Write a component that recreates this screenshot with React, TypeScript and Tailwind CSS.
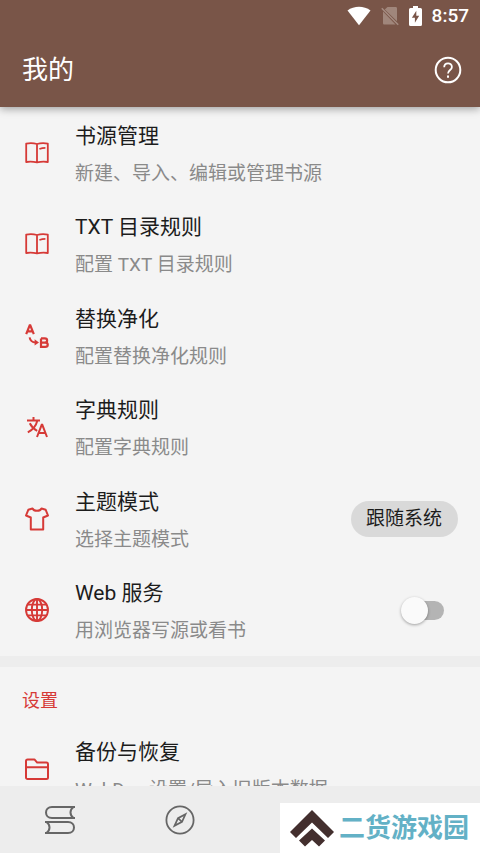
import type { ReactNode } from 'react';

type RowProps = {
    icon: ReactNode;
    title: string;
    summary: string;
    children?: ReactNode;
};

const iconProps = {
    viewBox: '0 0 24 24',
    fill: 'none',
    stroke: 'currentColor',
    strokeWidth: 2,
    strokeLinejoin: 'round' as const,
    className: 'size-6',
    'aria-hidden': true,
};

const BookIcon = () => (
    <svg {...iconProps} strokeWidth={1.8}>
        <path d="M1.2 2.6C4.5 2 8.5 2 12 3V21.4C8.5 20.6 4.5 20.4 1.2 21ZM12 3C15.5 2 19.5 2 22.8 2.6V21C19.5 20.4 15.5 20.6 12 21.4" />
        <path d="M14.4 8C16.2 7.3 18 6.9 20.4 6.9" />
    </svg>
);

// letter A swapped for letter B
const ReplaceIcon = () => (
    <svg {...iconProps} strokeWidth={2.2} strokeLinejoin="miter">
        <path d="M1.2 10.2L4.7 1.4H5.3L8.8 10.2M2.6 7.4H7.4" />
        <path d="M16 14.4V22.9H20.2C23.6 22.9 23.6 18.6 20.2 18.6H16M16 14.4H19.8C22.9 14.4 22.9 18.6 19.8 18.6" />
        <path d="M4.6 13.4C5.2 16.8 7.5 18.5 11 18.4" strokeWidth="2" />
        <path d="M9.6 15.2L14 18.4L9.6 21.4Z" fill="currentColor" stroke="none" />
    </svg>
);

const TranslateIcon = () => (
    <svg {...iconProps} strokeLinejoin="miter">
        <path d="M2 5.5H15M8.5 2V5.5M12.4 5.5C11 11 7.5 15 2.8 17.4M4.8 8.2C6.5 11.8 9 14.2 12.2 15.8" />
        <path d="M12 22L16.7 9.8H17.3L22 22M13.8 18H20.2" />
    </svg>
);

const ShirtIcon = () => (
    <svg {...iconProps}>
        <path d="M7.5 1.5C9 4.6 15 4.6 16.5 1.5L20.7 2.8L23 8.5L18.2 10.5V22.5H5.8V10.5L1 8.5L3.3 2.8Z" />
    </svg>
);

const GlobeIcon = () => (
    <svg {...iconProps} strokeWidth={1.9}>
        <circle cx="12" cy="12" r="11" />
        <ellipse cx="12" cy="12" rx="5.2" ry="11" />
        <path d="M12 1V23M2.8 6.6H21.2M1 12H23M2.8 17.4H21.2" />
    </svg>
);

const FolderIcon = () => (
    <svg {...iconProps}>
        <path d="M1 20.5V4C1 3 1.6 2.4 2.6 2.4H9.4L12.2 5.6H21.4C22.4 5.6 23 6.2 23 7.2V20.5C23 21.5 22.4 22 21.4 22H2.6C1.6 22 1 21.5 1 20.5ZM1 10.2H23" />
    </svg>
);

const rows = [
    { icon: <BookIcon />, title: '书源管理', summary: '新建、导入、编辑或管理书源' },
    { icon: <BookIcon />, title: 'TXT 目录规则', summary: '配置 TXT 目录规则' },
    { icon: <ReplaceIcon />, title: '替换净化', summary: '配置替换净化规则' },
    { icon: <TranslateIcon />, title: '字典规则', summary: '配置字典规则' },
];

function Row({ icon, title, summary, children }: RowProps) {
    return (
        <li className="flex items-center pr-[22px] pl-[25px]">
            <span className="w-[50px] shrink-0 text-[#d63a37]">{icon}</span>
            <div className="min-w-0 flex-1 pt-[2px]">
                <p className="text-[21px] leading-8 text-[#1c1c1c]">{title}</p>
                <p className="mt-2 text-[19px] leading-7 whitespace-nowrap text-[#8a8a8a]">{summary}</p>
            </div>
            {children}
        </li>
    );
}

function StatusBar() {
    return (
        <div className="flex h-8 items-center justify-end gap-[10px] pr-[11px] text-white">
            <svg viewBox="0 0 24 20" className="h-5 w-6" fill="currentColor" aria-hidden="true">
                <path d="M0.5 4.6C7 -0.4 17 -0.4 23.5 4.6L12 19.2Z" />
            </svg>
            <svg viewBox="0 0 18 20" className="h-5 w-[18px]" aria-hidden="true">
                <path d="M6.5 1H14.5C15.6 1 16 1.5 16 2.5V15.2L3.8 3.6ZM2 5.6L14.5 18.6H3.5C2.5 18.6 2 18 2 17Z" fill="#a0867b" />
                <path d="M0.8 2.2L17.2 18.8" stroke="#a58c82" strokeWidth="1.5" />
            </svg>
            <svg viewBox="0 0 13 20" className="h-5 w-[13px]" aria-hidden="true">
                <path d="M4 0H9V2H11.5Q13 2 13 3.5V18.5Q13 20 11.5 20H1.5Q0 20 0 18.5V3.5Q0 2 1.5 2H4Z" fill="#fff" />
                <path d="M7.3 4.8L2.9 11.8H5.9V16.8L10.2 9.8H7.3Z" fill="#795548" />
            </svg>
            <span className="text-[19px] leading-6 font-medium">8:57</span>
        </div>
    );
}

export default function App() {
    return (
        <div className="relative flex h-screen flex-col overflow-hidden bg-[#f4f4f4] font-['Roboto','Noto_Sans_CJK_SC',sans-serif]">
            <header className="z-10 shrink-0 bg-[#795548] text-white shadow-[0_2px_8px_rgba(0,0,0,0.35)]">
                <StatusBar />
                <div className="flex h-[75px] items-center justify-between pr-[18px] pl-[22px]">
                    <h1 className="text-[26px] leading-9">我的</h1>
                    <button type="button" aria-label="帮助">
                        <svg viewBox="0 0 28 28" className="size-7" fill="none" stroke="currentColor" strokeWidth="2" aria-hidden="true">
                            <circle cx="14" cy="14" r="12.3" />
                            <path d="M10.2 11.2C10.2 6 17.9 6.2 17.9 10.9C17.9 14 14 14 14 17.6" strokeWidth="1.8" />
                            <path d="M14 19.6V21.8" />
                        </svg>
                    </button>
                </div>
            </header>

            <main className="min-h-0 flex-1 overflow-y-auto [scrollbar-width:none]">
                <ul className="grid min-h-[549px] auto-rows-fr">
                    {rows.map((row) => (
                        <Row key={row.title} {...row} />
                    ))}
                    <Row icon={<ShirtIcon />} title="主题模式" summary="选择主题模式">
                        <select
                            aria-label="主题模式"
                            className="h-9 appearance-none rounded-full bg-[#d9d9d9] px-[15px] text-[19px] leading-7 text-[#1c1c1c]"
                        >
                            <option>跟随系统</option>
                        </select>
                    </Row>
                    <Row icon={<GlobeIcon />} title="Web 服务" summary="用浏览器写源或看书">
                        <input
                            type="checkbox"
                            role="switch"
                            aria-label="Web 服务"
                            className="relative mr-[14px] h-[19px] w-9 appearance-none rounded-full bg-[#b4b4b4] before:absolute before:-top-1 before:-left-[7px] before:size-[27px] before:rounded-full before:bg-[#fafafa] before:shadow-[0_1px_3px_rgba(0,0,0,0.35)] checked:before:left-4"
                        />
                    </Row>
                </ul>
                <section className="border-t-[11px] border-[#ededed]">
                    <h2 className="px-[22px] pt-5 pb-2 text-[18px] leading-7 text-[#d63a37]">设置</h2>
                    <ul className="grid auto-rows-[92px]">
                        <Row icon={<FolderIcon />} title="备份与恢复" summary="WebDav 设置/导入旧版本数据" />
                    </ul>
                </section>
            </main>

            <nav className="grid h-[67px] shrink-0 grid-cols-4 bg-[#ededed] text-[#666]">
                <button type="button" aria-label="书架" className="flex items-center justify-center">
                    <svg viewBox="0 0 32 30" className="h-[30px] w-8" fill="none" stroke="currentColor" strokeWidth="2" aria-hidden="true">
                        <path d="M31 2H8C0 2 0 13 8 13H31M29.5 2C25.5 5 25.5 10 29.5 13" />
                        <path d="M1 17H24C32 17 32 28 24 28H1M2.5 17C6.5 20 6.5 25 2.5 28" />
                    </svg>
                </button>
                <button type="button" aria-label="发现" className="flex items-center justify-center">
                    <svg viewBox="0 0 30 30" className="size-[30px]" fill="none" stroke="currentColor" strokeWidth="1.8" aria-hidden="true">
                        <circle cx="15" cy="15" r="13.6" />
                        <path d="M20.5 9.2L17 16.8L9.5 20.8L13 13.2ZM13 13.2L17 16.8" strokeWidth="1.7" />
                    </svg>
                </button>
            </nav>

            <div className="absolute right-0 bottom-0 z-20 flex h-[50px] w-[200px] items-center bg-white pl-[10px]">
                <svg viewBox="0 0 44 37" className="h-[37px] w-11 shrink-0" fill="#432f2e" aria-hidden="true">
                    <path d="M22 0L44 22L38 28L22 12.5L6 28L0 22Z" />
                    <path d="M22 18.5L35 30.5L29 36.5L22 30L15 36.5L9 30.5Z" />
                </svg>
                <span className="ml-[5px] text-[26px] leading-9 font-bold whitespace-nowrap text-[#63b1c6]">二货游戏园</span>
            </div>
        </div>
    );
}
